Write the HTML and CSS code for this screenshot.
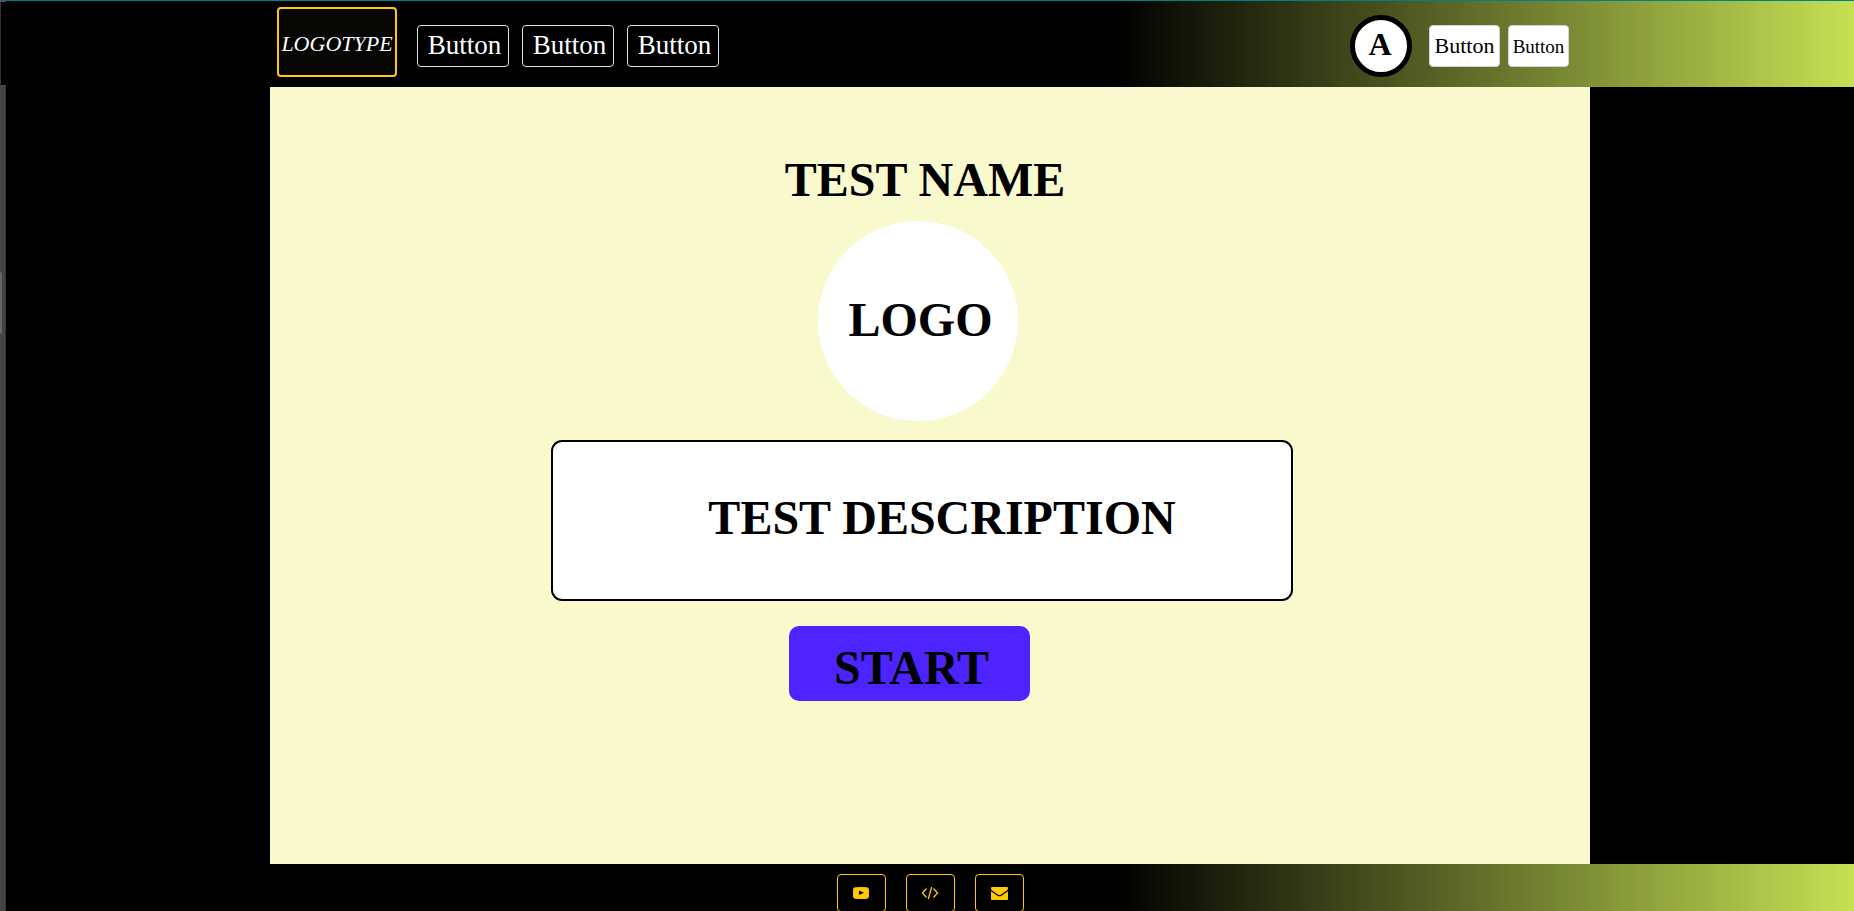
FILE: index.html
```html
<!DOCTYPE html>
<html lang="en">
<head>
<meta charset="utf-8">
<title>Test name</title>
<link rel="stylesheet" href="styles.css">
</head>
<body>
<div class="page">
  <aside class="rail"><div class="rail-top"></div><div class="rail-head"></div><div class="rail-track"><div class="rail-thumb"></div></div></aside>
  <div class="app">
    <header class="header bar">
      <div class="container header-row">
        <a class="logotype" href="#">LOGOTYPE</a>
        <nav class="nav">
          <button class="nav-button" type="button">Button</button>
          <button class="nav-button" type="button">Button</button>
          <button class="nav-button" type="button">Button</button>
        </nav>
        <div class="account">
          <div class="avatar">A</div>
          <button class="light-button" type="button">Button</button>
          <button class="light-button small" type="button">Button</button>
        </div>
      </div>
    </header>
    <main class="container content">
      <h1 class="title">TEST NAME</h1>
      <div class="logo">LOGO</div>
      <div class="description">TEST DESCRIPTION</div>
      <button class="start" type="button">START</button>
    </main>
    <footer class="footer bar">
      <a class="social" href="#" aria-label="Video">
        <svg width="16" height="12" viewBox="0 0 16 12"><path fill="#ffc907" fill-rule="evenodd" d="M2 .3Q8-.2 14 .3 15.800.5 15.900 2.500 16.100 6 15.900 9.500 15.800 11.500 14 11.700 8 12.200 2 11.700.2 11.500.1 9.500-.1 6 .1 2.500.2.5 2 .3ZM6 3.500v4.500l5-2.200z"/></svg>
      </a>
      <a class="social" href="#" aria-label="Source code">
        <svg width="18" height="14" viewBox="0 0 18 14"><path fill="none" stroke="#ffc907" stroke-width="1.300" d="M5.500 2.500 1.500 7l4 4.500M12.500 2.500l4 4.500-4 4.500M10.700 1 7.300 13"/></svg>
      </a>
      <a class="social" href="#" aria-label="Mail">
        <svg width="17" height="13" viewBox="0 0 17 13"><path fill="#ffc907" d="M1 0h15Q17 0 17 1.200 17 2.700 15.500 3.800L9.800 7.800Q8.500 8.600 7.200 7.800L1.500 3.800Q0 2.700 0 1.200 0 0 1 0ZM0 4.200 6.500 8.700Q8.500 10 10.500 8.700L17 4.200v7.800q0 1-1 1h-15Q0 13 0 12Z"/></svg>
      </a>
    </footer>
  </div>
</div>
</body>
</html>
```
FILE: styles.css
```css
* { box-sizing: border-box; }
body {
  margin: 0;
  background: #000;
  font-family: "Liberation Serif", "Times New Roman", serif;
  overflow: hidden;
}
.page { display: flex; height: 100vh; }
.rail { width: 6px; flex: none; display: flex; flex-direction: column; }
.rail-top { height: 2px; background: #555; }
.rail-head { height: 83px; border-left: 1px solid #333; }
.rail-track { flex: 1; background: #444; border-right: 1px solid #333; padding-top: 187px; }
.rail-thumb { width: 2px; height: 62px; background: #666; border-radius: 0 2px 2px 0; }
.app { flex: 1; display: flex; flex-direction: column; }
.bar { background: linear-gradient(90deg, #000 60%, #c7e054); }
.container { width: 100%; max-width: 1320px; margin: 0 auto; }
.header { border-top: 1px solid #00808a; flex: none; }
.header-row {
  display: flex;
  align-items: center;
  height: 86px;
  padding: 0 21px 0 7px;
}
.logotype {
  width: 120px;
  height: 70px;
  margin: 0 20px 4px 0;
  display: flex;
  align-items: center;
  justify-content: center;
  padding-top: 3px;
  border: 2px solid #ffc907;
  border-radius: 4px;
  background: #060604;
  color: #fff;
  font-size: 22px;
  font-style: italic;
  text-decoration: none;
}
button { font-family: inherit; cursor: pointer; }
.nav { display: flex; gap: 13px; padding-top: 4px; }
.nav-button {
  width: 92px;
  height: 42px;
  padding: 0 0 2px 3px;
  background: #000;
  border: 1px solid #dee2e6;
  border-radius: 4px;
  color: #fff;
  font-size: 27px;
}
.account { display: flex; align-items: center; gap: 8px; margin-left: auto; padding-top: 4px; }
.avatar {
  width: 62px;
  height: 62px;
  margin: 0 9px 1px 0;
  display: flex;
  align-items: center;
  justify-content: center;
  padding: 0 2px 3px 0;
  background: #fff;
  border: 5px solid #000;
  border-radius: 50%;
  font-size: 32px;
  font-weight: bold;
}
.light-button {
  width: 71px;
  height: 42px;
  padding: 0;
  background: #fff;
  border: 1px solid #ced4da;
  border-radius: 4px;
  color: #000;
  font-size: 22px;
}
.light-button.small { width: 61px; padding-top: 2px; font-size: 19px; }
.content {
  flex: 1;
  display: flex;
  flex-direction: column;
  align-items: center;
  background: #f9f9ce;
  padding: 65px 24px 0 0;
  font-size: 48px;
  font-weight: bold;
  line-height: 56px;
}
.title { margin: 0 0 13px 14px; font-size: inherit; }
.logo {
  width: 200px;
  height: 200px;
  display: flex;
  align-items: center;
  justify-content: center;
  padding: 0 0 3px 5px;
  background: #fff;
  border-radius: 50%;
}
.description {
  width: 742px;
  height: 161px;
  margin: 19px 0 25px 8px;
  display: flex;
  align-items: center;
  justify-content: center;
  padding: 0 0 6px 40px;
  background: #fff;
  border: 2px solid #000;
  border-radius: 11px;
}
.start {
  width: 241px;
  height: 75px;
  margin-right: 17px;
  padding: 8px 0 0 4px;
  background: #4d24ff;
  border: 0;
  border-radius: 10px;
  color: #000;
  font-size: inherit;
  font-weight: bold;
}
.footer {
  flex: none;
  height: 47px;
  display: flex;
  justify-content: center;
  gap: 20px;
  padding-top: 10px;
}
.social {
  width: 49px;
  height: 38px;
  display: flex;
  align-items: center;
  justify-content: center;
  border: 1px solid #ffc907;
  border-radius: 4px;
}
```
